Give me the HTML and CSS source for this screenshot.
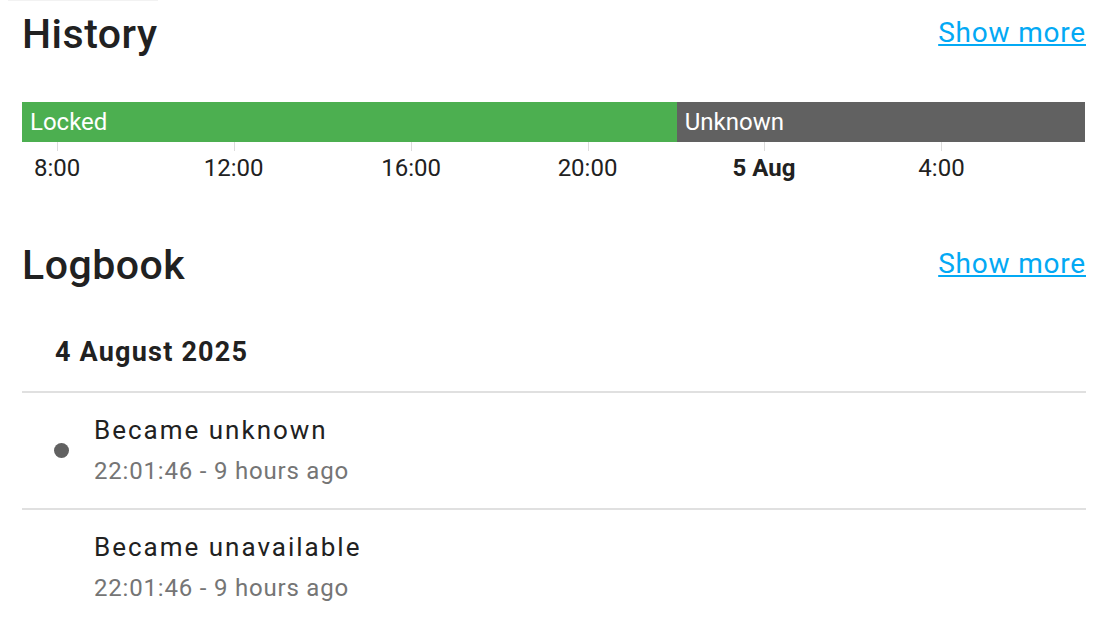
FILE: index.html
```html
<!DOCTYPE html>
<html lang="en">
<head>
    <meta charset="UTF-8">
    <title>History and Logbook</title>
    <link rel="stylesheet" href="styles.css">
</head>
<body>
    <div class="top-fade"></div>

    <section class="block">
        <div class="block-head">
            <h2>History</h2>
            <a href="#" class="more">Show more</a>
        </div>
        <div class="timeline">
            <div class="bar">
                <div class="seg locked" style="width: 61.6%">Locked</div>
                <div class="seg unknown">Unknown</div>
            </div>
            <div class="axis">
                <div class="tick" style="left: 3.3%"><span>8:00</span></div>
                <div class="tick" style="left: 19.9%"><span>12:00</span></div>
                <div class="tick" style="left: 36.6%"><span>16:00</span></div>
                <div class="tick" style="left: 53.2%"><span>20:00</span></div>
                <div class="tick" style="left: 69.8%"><span class="day">5 Aug</span></div>
                <div class="tick" style="left: 86.5%"><span>4:00</span></div>
            </div>
        </div>
    </section>

    <section class="block">
        <div class="block-head">
            <h2>Logbook</h2>
            <a href="#" class="more">Show more</a>
        </div>
        <div class="date">4 August 2025</div>
        <div class="entry">
            <span class="dot"></span>
            <div class="entry-text">
                <div class="msg">Became unknown</div>
                <div class="when">22:01:46 - 9 hours ago</div>
            </div>
        </div>
        <div class="entry">
            <span class="dot none"></span>
            <div class="entry-text">
                <div class="msg">Became unavailable</div>
                <div class="when">22:01:46 - 9 hours ago</div>
            </div>
        </div>
    </section>
</body>
</html>
```

FILE: styles.css
```css
body {
    margin: 0;
    padding: 0 25px 0 22px;
    font-family: Roboto, sans-serif;
    color: #212121;
    background: #fff;
}
.top-fade {
    height: 1px;
    width: 150px;
    margin-left: -14px;
    background: #f2f2f2;
}
.block-head {
    display: flex;
    justify-content: space-between;
    align-items: center;
}
h2 {
    margin: 0;
    font-size: 41px;
    font-weight: 500;
    line-height: 50px;
    letter-spacing: 0.5px;
}
.more {
    color: #03a9f4;
    font-size: 28px;
    letter-spacing: 0.8px;
    margin: -3px -1px 0 0;
}
.block:first-of-type .block-head {
    padding-top: 8px;
}
.timeline {
    margin-top: 43px;
}
.bar {
    display: flex;
    height: 40px;
}
.seg {
    color: #fff;
    font-size: 24px;
    line-height: 40px;
    padding-left: 8px;
    box-sizing: border-box;
}
.locked { background: #4caf50; }
.unknown { background: #616161; flex: 1; }
.axis {
    position: relative;
    height: 54px;
}
.tick {
    position: absolute;
    top: 0;
    width: 1px;
    height: 9px;
    background: #dcdcdc;
}
.tick span {
    position: absolute;
    top: 12px;
    left: 0;
    transform: translateX(-50%);
    font-size: 24px;
    white-space: nowrap;
}
.tick .day { font-weight: 700; }

.block + .block {
    margin-top: 44px;
}
.date {
    font-size: 27px;
    font-weight: 700;
    line-height: 28px;
    letter-spacing: 1.2px;
    padding: 48px 0 25px 33px;
}
.entry {
    display: flex;
    align-items: center;
    border-top: 2px solid #e0e0e0;
    padding: 19px 0 19px 32px;
    margin-right: -1px;
}
.dot {
    width: 15px;
    height: 15px;
    border-radius: 50%;
    background: #616161;
    margin-right: 25px;
    flex: none;
}
.dot.none { background: transparent; }
.msg {
    font-size: 26px;
    letter-spacing: 2px;
    line-height: 36px;
}
.when {
    font-size: 24px;
    color: #757575;
    letter-spacing: 0.8px;
    line-height: 36px;
    margin-top: 5px;
}
```
